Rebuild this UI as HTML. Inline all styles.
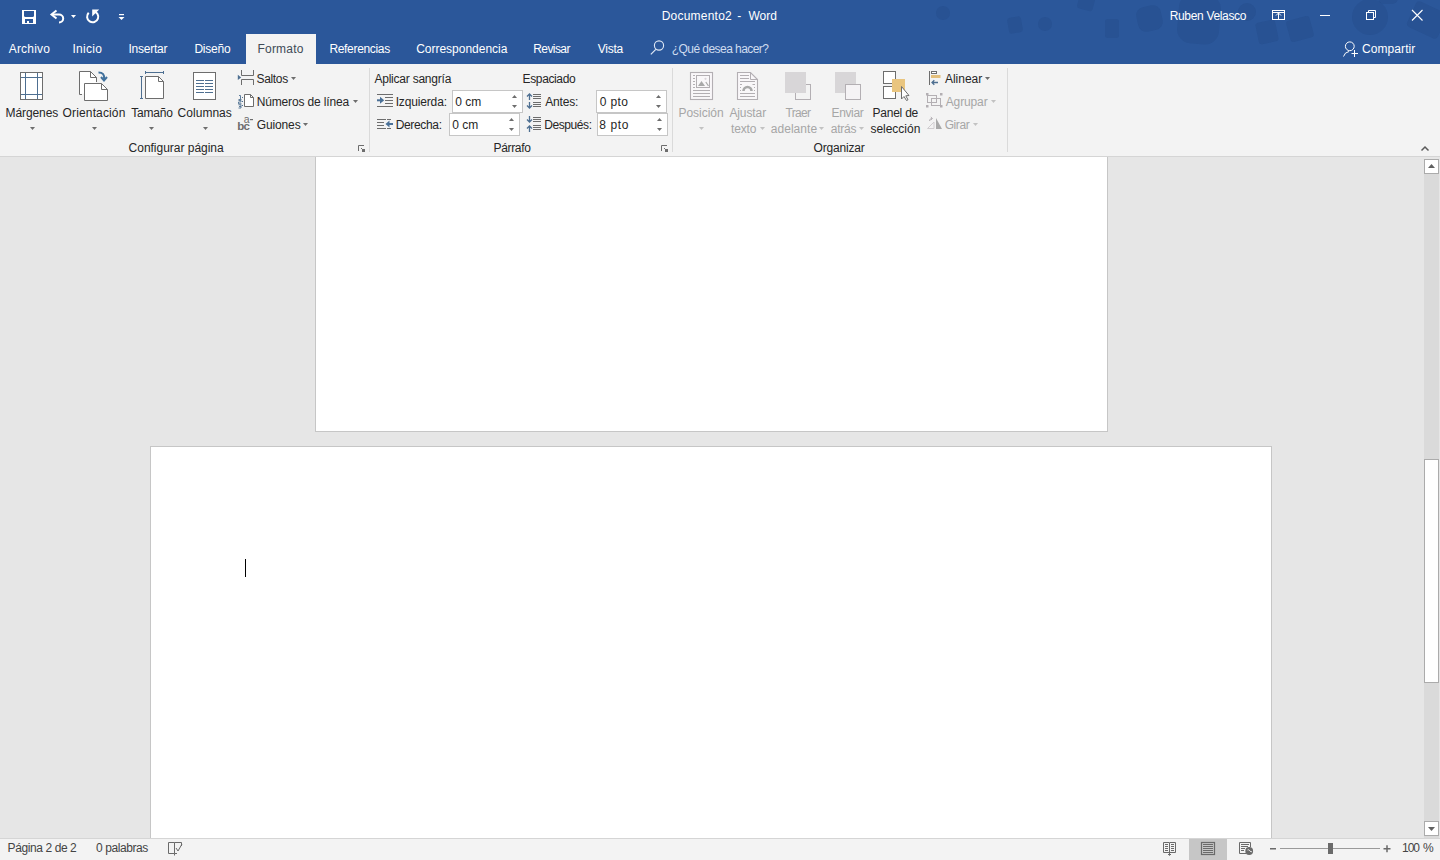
<!DOCTYPE html><html><head><meta charset="utf-8"><title>Documento2 - Word</title><style>
html,body{margin:0;padding:0;width:1440px;height:860px;overflow:hidden;background:#e6e6e6;font-family:'Liberation Sans', sans-serif;}
.a{position:absolute;}
.t{position:absolute;white-space:nowrap;line-height:20px;}
</style></head><body>
<div class="a" style="left:0;top:0;width:1440px;height:64px;background:#2b579a"></div>
<svg class="a" style="left:0;top:0" width="1440" height="64" viewBox="0 0 1440 64">
<g fill="rgba(10,30,80,0.09)">
<circle cx="943" cy="13" r="7"/>
<circle cx="1045" cy="24" r="7"/>
<circle cx="1247" cy="12" r="9"/>
<circle cx="1370" cy="17" r="18"/>
<rect x="1008" y="17" width="14" height="16" rx="3" transform="rotate(-10 1015.0 25.0)"/>
<rect x="1105" y="19" width="14" height="19" rx="3" transform="rotate(0 1112.0 28.5)"/>
<rect x="1078" y="-4" width="16" height="14" rx="3" transform="rotate(15 1086.0 3.0)"/>
<rect x="1137" y="6" width="25" height="25" rx="8" transform="rotate(-12 1149.5 18.5)"/>
<rect x="1178" y="-6" width="42" height="50" rx="14" transform="rotate(5 1199.0 19.0)"/>
<rect x="1257" y="21" width="20" height="22" rx="3" transform="rotate(-12 1267.0 32.0)"/>
<rect x="1288" y="18" width="24" height="22" rx="3" transform="rotate(-15 1300.0 29.0)"/>
<rect x="1410" y="6" width="34" height="28" rx="4" transform="rotate(25 1427.0 20.0)"/>
<rect x="1378" y="-8" width="20" height="12" rx="6" transform="rotate(0 1388.0 -2.0)"/>
</g></svg>
<div class="a" style="left:246px;top:34px;width:70px;height:30px;background:#f3f3f3"></div>
<div class="a" style="left:0;top:64px;width:1440px;height:92px;background:#f3f3f3"></div>
<div class="a" style="left:0;top:156px;width:1440px;height:1px;background:#d5d5d5"></div>
<div class="a" style="left:369px;top:68px;width:1px;height:84px;background:#dadada"></div>
<div class="a" style="left:672px;top:68px;width:1px;height:84px;background:#dadada"></div>
<div class="a" style="left:1007px;top:68px;width:1px;height:84px;background:#dadada"></div>
<div class="a" style="left:315px;top:100px;width:791px;height:331px;background:#fff;border:1px solid #c6c6c6;border-top:none"></div>
<div class="a" style="left:150px;top:446px;width:1120px;height:420px;background:#fff;border:1px solid #c6c6c6"></div>
<div class="a" style="left:0;top:64px;width:1440px;height:92px;background:#f3f3f3"></div>
<div class="a" style="left:0;top:156px;width:1440px;height:1px;background:#d5d5d5"></div>
<div class="a" style="left:369px;top:68px;width:1px;height:84px;background:#dadada"></div>
<div class="a" style="left:672px;top:68px;width:1px;height:84px;background:#dadada"></div>
<div class="a" style="left:1007px;top:68px;width:1px;height:84px;background:#dadada"></div>
<div class="a" style="left:1424px;top:159px;width:15px;height:679px;background:#dadada"></div>
<div class="a" style="left:0;top:838px;width:1440px;height:22px;background:#f3f3f3;border-top:1px solid #d5d5d5"></div>
<div class="a" style="left:1189px;top:839px;width:38px;height:21px;background:#c6c6c6"></div>
<svg class="a" style="left:0;top:0" width="1440" height="860" viewBox="0 0 1440 860">
<rect x="22" y="10" width="14" height="14" fill="#ffffff"/>
<path d="M24 11 H34 V15.5 Q34 17 32.5 17 H25.5 Q24 17 24 15.5 Z" fill="#2b579a"/>
<rect x="25" y="19" width="8" height="4" fill="#2b579a"/>
<rect x="27" y="21" width="2" height="2" fill="#ffffff"/>
<path d="M56.5 10.5 L51.5 14.5 L56.5 18.5" fill="none" stroke="#ffffff" stroke-width="2"/>
<path d="M52 14.5 H59 A4.2 4 0 0 1 59 22.5 " fill="none" stroke="#ffffff" stroke-width="2"/>
<path d="M71 15 H76 L73.5 18 Z" fill="#ffffff"/>
<path d="M93.5 11.2 A5.6 5.6 0 1 1 88.7 12.8" fill="none" stroke="#ffffff" stroke-width="2"/>
<path d="M92.2 9.6 H99.2 L92.2 16.4 Z" fill="#ffffff"/>
<rect x="119" y="14" width="5" height="1.2" fill="#ffffff"/>
<path d="M118.5 17 H124.5 L121.5 20 Z" fill="#ffffff"/>
<rect x="1272.5" y="10.5" width="12" height="9" fill="none" stroke="#ffffff"/>
<line x1="1272" y1="12.5" x2="1285" y2="12.5" stroke="#ffffff"/>
<line x1="1278.5" y1="13" x2="1278.5" y2="20" stroke="#ffffff"/>
<path d="M1276 15.5 L1278.5 13 L1281 15.5" fill="none" stroke="#ffffff"/>
<line x1="1320" y1="15.5" x2="1330" y2="15.5" stroke="#ffffff"/>
<path d="M1368.5 12 V10.5 H1375.5 V17.5 H1374" fill="none" stroke="#ffffff"/>
<rect x="1366.5" y="12.5" width="7" height="7" fill="none" stroke="#ffffff"/>
<path d="M1412 10 L1422.5 20.5 M1422.5 10 L1412 20.5" stroke="#ffffff" stroke-width="1.1"/>
<circle cx="659" cy="45.5" r="4.6" fill="none" stroke="#dfe8f5" stroke-width="1.1"/>
<line x1="650.8" y1="54.3" x2="655.8" y2="49.3" stroke="#dfe8f5" stroke-width="1.2"/>
<circle cx="1349.8" cy="46.3" r="4.4" fill="none" stroke="#ffffff" stroke-width="1"/>
<path d="M1343.5 56.5 A7 7 0 0 1 1349 51.5" fill="none" stroke="#ffffff" stroke-width="1"/>
<path d="M1351.5 53.5 H1358 M1354.5 50 V57" stroke="#ffffff" stroke-width="1"/>
<rect x="20.5" y="72.5" width="22" height="27" fill="#ffffff" stroke="#6d6d6d"/>
<path d="M25.5 73 V99 M37.5 73 V99 M21 77.5 H42 M21 94.5 H42" stroke="#4e6f91"/>
<path d="M82 94.5 H79.5 V71.5 H90.5 L96.5 77.5 V82" fill="#ffffff" stroke="#6d6d6d"/>
<path d="M90.5 71.5 V77.5 H96.5" fill="none" stroke="#6d6d6d"/>
<path d="M84.5 83.5 H101.5 L107.5 89.5 V100.5 H84.5 Z" fill="#ffffff" stroke="#6d6d6d"/>
<path d="M101.5 83.5 V89.5 H107.5" fill="none" stroke="#6d6d6d"/>
<path d="M98.5 72.5 Q105 72.5 104 79" fill="none" stroke="#41719c" stroke-width="2"/>
<path d="M101 77 L104 80.5 L107 77" fill="none" stroke="#41719c" stroke-width="2"/>
<path d="M145.5 76.5 H158.5 L163.5 81.5 V98.5 H145.5 Z" fill="#ffffff" stroke="#6d6d6d"/>
<path d="M158.5 76.5 V81.5 H163.5" fill="none" stroke="#6d6d6d"/>
<path d="M145 72.5 H164 M145.5 71 V74 M163.5 71 V74" stroke="#4e6f91"/>
<path d="M141.5 76 V99 M140 76.5 H143 M140 98.5 H143" stroke="#4e6f91"/>
<rect x="193.5" y="72.5" width="22" height="27" fill="#ffffff" stroke="#6d6d6d"/>
<path d="M196 80.5 H204 M205 80.5 H213" stroke="#4e6f91"/>
<path d="M196 83.5 H204 M205 83.5 H213" stroke="#4e6f91"/>
<path d="M196 86.5 H204 M205 86.5 H213" stroke="#4e6f91"/>
<path d="M196 89.5 H204 M205 89.5 H213" stroke="#4e6f91"/>
<path d="M196 92.5 H204 M205 92.5 H213" stroke="#4e6f91"/>
<path d="M30.0 127 H35.0 L32.5 130 Z" fill="#6d6d6d"/>
<path d="M92.0 127 H97.0 L94.5 130 Z" fill="#6d6d6d"/>
<path d="M149.0 127 H154.0 L151.5 130 Z" fill="#6d6d6d"/>
<path d="M203.0 127 H208.0 L205.5 130 Z" fill="#6d6d6d"/>
<path d="M699.0 127 H704.0 L701.5 130 Z" fill="#c2c2c2"/>
<path d="M241.5 70 V75.5 H253.5 V70 M241.5 85 V79.5 H253.5 V85" fill="none" stroke="#6d6d6d"/>
<path d="M237.8 74.8 L241.2 77.4 L237.8 80 Z" fill="#4e6f91"/>
<path d="M244.5 94.5 H250.5 L253.5 97.5 V106.5 H244.5 Z" fill="#ffffff" stroke="#6d6d6d"/>
<path d="M250.5 94.5 V97.5 H253.5" fill="none" stroke="#6d6d6d"/>
<path d="M239 95.5 H240.5 V99 M238.5 99.5 H241.5" fill="none" stroke="#4e6f91" stroke-width="0.9"/>
<path d="M238.5 100.5 H241 V102 H238.5 V103.8 H241.5" fill="none" stroke="#4e6f91" stroke-width="0.9"/>
<path d="M238.5 104.8 H241 V106.5 H239 M241 106.5 V108 H238.5" fill="none" stroke="#4e6f91" stroke-width="0.9"/>
<rect x="242" y="97" width="1" height="1" fill="#4e6f91"/><rect x="242" y="101" width="1" height="1" fill="#4e6f91"/><rect x="242" y="105" width="1" height="1" fill="#4e6f91"/>
<text x="243.8" y="123" font-family="Liberation Sans" font-size="10.5" fill="#6d6d6d">a</text>
<rect x="250" y="119" width="3" height="1.2" fill="#6d6d6d"/>
<text x="237.2" y="130" font-family="Liberation Sans" font-size="11.5" font-weight="bold" fill="#6d6d6d" letter-spacing="-0.6">bc</text>
<path d="M291.0 77 H296.0 L293.5 80 Z" fill="#6d6d6d"/>
<path d="M353.0 100 H358.0 L355.5 103 Z" fill="#6d6d6d"/>
<path d="M303.0 123 H308.0 L305.5 126 Z" fill="#6d6d6d"/>
<path d="M985.0 77 H990.0 L987.5 80 Z" fill="#6d6d6d"/>
<path d="M991.0 100 H996.0 L993.5 103 Z" fill="#c2c2c2"/>
<path d="M973.0 123 H978.0 L975.5 126 Z" fill="#c2c2c2"/>
<path d="M760.0 127 H765.0 L762.5 130 Z" fill="#c2c2c2"/>
<path d="M819.0 127 H824.0 L821.5 130 Z" fill="#c2c2c2"/>
<path d="M859.0 127 H864.0 L861.5 130 Z" fill="#c2c2c2"/>
<path d="M358.5 151 V145.5 H364" fill="none" stroke="#6d6d6d"/>
<path d="M361 148 L363 150" fill="none" stroke="#6d6d6d"/>
<rect x="362" y="149" width="3" height="3" fill="#6d6d6d"/>
<path d="M661.5 151 V145.5 H667" fill="none" stroke="#6d6d6d"/>
<path d="M664 148 L666 150" fill="none" stroke="#6d6d6d"/>
<rect x="665" y="149" width="3" height="3" fill="#6d6d6d"/>
<path d="M377 94.5 H393 M385 97.5 H393 M385 100.5 H393 M385 103.5 H393 M377 106.5 H393" stroke="#6d6d6d"/>
<path d="M377 100.3 H381" stroke="#4a7097" stroke-width="2"/>
<path d="M380 96.8 L384.2 100.3 L380 103.8 Z" fill="#4a7097"/>
<path d="M377 119.5 H386 M387 119.5 H391 M377 122.5 H384 M377 125.5 H384 M377 128.5 H386 M387 128.5 H391" stroke="#6d6d6d"/>
<path d="M393 124 H388.5" stroke="#4a7097" stroke-width="2"/>
<path d="M389.5 120.5 L385.5 124 L389.5 127.5 Z" fill="#4a7097"/>
<path d="M533 94.5 H541 M533 102.5 H541" stroke="#6d6d6d"/>
<path d="M533 96.5 H541 M533 104.5 H541" stroke="#6d6d6d"/>
<path d="M533 98.5 H541 M533 106.5 H541" stroke="#6d6d6d"/>
<path d="M529.5 100 V94 M527 96.5 L529.5 94 L532 96.5" fill="none" stroke="#4e6f91" stroke-width="1.3"/>
<path d="M529.5 102 V108 M527 105.5 L529.5 108 L532 105.5" fill="none" stroke="#4e6f91" stroke-width="1.3"/>
<path d="M533 117.5 H541 M533 125.5 H541" stroke="#6d6d6d"/>
<path d="M533 119.5 H541 M533 127.5 H541" stroke="#6d6d6d"/>
<path d="M533 121.5 H541 M533 129.5 H541" stroke="#6d6d6d"/>
<path d="M529.5 116 V122 M527 119.5 L529.5 122 L532 119.5" fill="none" stroke="#4e6f91" stroke-width="1.3"/>
<path d="M529.5 132 V126 M527 128.5 L529.5 126 L532 128.5" fill="none" stroke="#4e6f91" stroke-width="1.3"/>
<rect x="452.5" y="90.5" width="70" height="22" fill="#ffffff" stroke="#c6c6c6"/>
<path d="M512 98 H517 L514.5 95 Z" fill="#6d6d6d"/>
<path d="M512 105 H517 L514.5 108 Z" fill="#6d6d6d"/>
<rect x="449.5" y="113.5" width="70" height="22" fill="#ffffff" stroke="#c6c6c6"/>
<path d="M509 121 H514 L511.5 118 Z" fill="#6d6d6d"/>
<path d="M509 128 H514 L511.5 131 Z" fill="#6d6d6d"/>
<rect x="596.5" y="90.5" width="70" height="22" fill="#ffffff" stroke="#c6c6c6"/>
<path d="M656 98 H661 L658.5 95 Z" fill="#6d6d6d"/>
<path d="M656 105 H661 L658.5 108 Z" fill="#6d6d6d"/>
<rect x="597.5" y="113.5" width="70" height="22" fill="#ffffff" stroke="#c6c6c6"/>
<path d="M657 121 H662 L659.5 118 Z" fill="#6d6d6d"/>
<path d="M657 128 H662 L659.5 131 Z" fill="#6d6d6d"/>
<rect x="690.5" y="72.5" width="22" height="27" fill="#f9f7f9" stroke="#b3afb3" stroke-width="1.1"/>
<rect x="696.5" y="75.5" width="13" height="12" fill="none" stroke="#b3afb3"/>
<path d="M698 86 L701.5 81 L705 86 Z" fill="#a9a9a9"/>
<path d="M705.8 82 L708.5 86" stroke="#a9a9a9" stroke-width="1.2"/>
<circle cx="705.5" cy="78.8" r="1.1" fill="#d9d3d9"/>
<path d="M693 75.5 H695 M693 78.5 H695 M693 81.5 H695 M693 84.5 H695 M693 87.5 H695 M693 90.5 H710 M693 93.5 H710 M693 96.5 H710" stroke="#b3afb3"/>
<path d="M737.5 72.5 H750.5 L757.5 79.5 V99.5 H737.5 Z" fill="#f9f7f9" stroke="#b3afb3" stroke-width="1.1"/>
<path d="M750.5 72.5 V79.5 H757.5" fill="none" stroke="#b3afb3"/>
<path d="M740 75.5 H749 M740 78.5 H749 M740 81.5 H755 M740 84.5 H742 M752.5 84.5 H755 M740 93.5 H755 M740 96.5 H755" stroke="#b3afb3" stroke-width="1.1"/>
<rect x="740" y="87" width="1" height="1" fill="#b3afb3"/><rect x="740" y="90" width="1" height="1" fill="#b3afb3"/><rect x="754" y="87" width="1" height="1" fill="#b3afb3"/><rect x="754" y="90" width="1" height="1" fill="#b3afb3"/>
<path d="M743.5 91 A4 4 0 0 1 751.5 91" fill="none" stroke="#a9a9a9" stroke-width="2.6"/>
<rect x="795.5" y="84.5" width="15" height="15" fill="none" stroke="#b3afb3"/>
<rect x="785" y="72" width="21" height="21" fill="#d8d6d8"/>
<rect x="835" y="72" width="21" height="21" fill="#d8d6d8"/>
<rect x="845.5" y="84.5" width="15" height="15" fill="#f5f3f5" stroke="#b3afb3"/>
<rect x="883.5" y="71.5" width="12" height="12" fill="#ffffff" stroke="#6d6d6d"/>
<rect x="883.5" y="86.5" width="12" height="12" fill="#ffffff" stroke="#6d6d6d"/>
<rect x="892" y="79" width="13" height="13" fill="#e9c57f"/>
<path d="M901.5 86.5 V99 L904 96.5 L906.5 100.5 L908 99.8 L905.8 95.8 L909 95.5 Z" fill="#ffffff" stroke="#6d6d6d" stroke-width="1"/>
<path d="M929.5 71 V85" stroke="#6d6d6d"/>
<rect x="931.5" y="71.5" width="5" height="2" fill="#ffffff" stroke="#6d6d6d"/>
<rect x="931" y="75" width="9.5" height="3" fill="#e3bf7c"/>
<path d="M938 82.5 H932 M934.3 80.2 L932 82.5 L934.3 84.8" fill="none" stroke="#4e6f91" stroke-width="1.3"/>
<rect x="927.5" y="95.5" width="9" height="7" fill="none" stroke="#b3afb3"/>
<rect x="931.5" y="98.5" width="9" height="7" fill="none" stroke="#b3afb3"/>
<rect x="926" y="93" width="2.5" height="2.5" fill="#b3afb3"/>
<rect x="940" y="93" width="2.5" height="2.5" fill="#b3afb3"/>
<rect x="926" y="105" width="2.5" height="2.5" fill="#b3afb3"/>
<rect x="940" y="105" width="2.5" height="2.5" fill="#b3afb3"/>
<path d="M936 118 L942 129 H936 Z" fill="#a9a9a9"/>
<path d="M934 122 L927.5 128.5 H934 Z" fill="none" stroke="#d0cdd0"/>
<path d="M929.5 121 Q929.5 118.5 932 118.5 M930.8 117 L932.5 118.5 L930.8 120" fill="none" stroke="#b3afb3"/>
<path d="M1421.5 150.5 L1425 147 L1428.5 150.5" fill="none" stroke="#5a5a5a" stroke-width="1.5"/>
<rect x="1424.5" y="159.5" width="14" height="14" fill="#ffffff" stroke="#ababab"/>
<path d="M1428 168 H1435 L1431.5 164 Z" fill="#606060"/>
<rect x="1424.5" y="459.5" width="14" height="223" fill="#ffffff" stroke="#ababab"/>
<rect x="1424.5" y="821.5" width="14" height="14" fill="#ffffff" stroke="#ababab"/>
<path d="M1428 827 H1435 L1431.5 831 Z" fill="#606060"/>
<rect x="245" y="559" width="1" height="18" fill="#000000"/>
<path d="M168.5 842.5 H174.5 V853.5 H168.5 Z M174.5 842.5 H181.5 V846 M174.5 853.5 H177" fill="none" stroke="#6a6a6a"/>
<path d="M176 848 L178 851 L182 844" fill="none" stroke="#6a6a6a"/>
<path d="M174.5 853.5 V855.5" stroke="#6a6a6a"/>
<path d="M1163.5 842.5 H1169.5 H1175.5 V852.5 H1163.5 Z" fill="none" stroke="#6a6a6a"/>
<path d="M1169.5 843 V855 M1165 844.5 H1168 M1165 846.5 H1168 M1165 848.5 H1168 M1165 850.5 H1168 M1171 844.5 H1174 M1171 846.5 H1174 M1171 848.5 H1174 M1171 850.5 H1174" stroke="#6a6a6a"/>
<path d="M1168 854 L1169.5 855.5 L1171 854" fill="none" stroke="#6a6a6a"/>
<rect x="1201.5" y="842.5" width="13" height="12" fill="none" stroke="#6a6a6a" stroke-width="1.2"/>
<path d="M1203 844.5 H1213 M1203 846.5 H1213 M1203 848.5 H1213 M1203 850.5 H1213 M1203 852.5 H1213" stroke="#6a6a6a"/>
<path d="M1246 853.5 H1239.5 V842.5 H1250.5 V847" fill="none" stroke="#6a6a6a"/>
<path d="M1241 844.5 H1249 M1241 846.5 H1248 M1241 848.5 H1245 M1241 850.5 H1244" stroke="#6a6a6a"/>
<circle cx="1249.2" cy="851" r="3.9" fill="#6a6a6a"/>
<path d="M1247.5 850 Q1249 849 1250 851 Q1251 852.5 1252 851.5" fill="none" stroke="#ffffff" stroke-width="0.8"/>
<rect x="1270" y="848" width="6" height="1.5" fill="#6a6a6a"/>
<rect x="1280" y="848" width="100" height="1" fill="#9a9a9a"/>
<rect x="1328" y="843" width="5" height="11" fill="#6a6a6a"/>
<path d="M1383.5 848.7 H1390.5 M1387 845.2 V852.2" stroke="#6a6a6a" stroke-width="1.5"/>
</svg>
<div class="t" style="left:661.70px;top:6px;font-size:12px;letter-spacing:0.222px;color:#ffffff;">Documento2</div>
<div class="t" style="left:737.20px;top:6px;font-size:12px;letter-spacing:0.000px;color:#ffffff;">-</div>
<div class="t" style="left:748.40px;top:6px;font-size:12px;letter-spacing:0.000px;color:#ffffff;">Word</div>
<div class="t" style="left:1169.70px;top:6px;font-size:12px;letter-spacing:-0.333px;color:#ffffff;">Ruben Velasco</div>
<div class="t" style="left:8.70px;top:39px;font-size:12px;letter-spacing:0.217px;color:#ffffff;">Archivo</div>
<div class="t" style="left:72.40px;top:39px;font-size:12px;letter-spacing:0.320px;color:#ffffff;">Inicio</div>
<div class="t" style="left:128.40px;top:39px;font-size:12px;letter-spacing:-0.214px;color:#ffffff;">Insertar</div>
<div class="t" style="left:194.40px;top:39px;font-size:12px;letter-spacing:-0.200px;color:#ffffff;">Diseño</div>
<div class="t" style="left:257.50px;top:39px;font-size:12px;letter-spacing:0.200px;color:#414b57;">Formato</div>
<div class="t" style="left:329.40px;top:39px;font-size:12px;letter-spacing:-0.320px;color:#ffffff;">Referencias</div>
<div class="t" style="left:416.20px;top:39px;font-size:12px;letter-spacing:-0.014px;color:#ffffff;">Correspondencia</div>
<div class="t" style="left:533.20px;top:39px;font-size:12px;letter-spacing:-0.567px;color:#ffffff;">Revisar</div>
<div class="t" style="left:597.80px;top:39px;font-size:12px;letter-spacing:-0.250px;color:#ffffff;">Vista</div>
<div class="t" style="left:671.80px;top:39px;font-size:12px;letter-spacing:-0.556px;color:#cfdcef;">¿Qué desea hacer?</div>
<div class="t" style="left:1361.90px;top:39px;font-size:12px;letter-spacing:0.100px;color:#ffffff;">Compartir</div>
<div class="t" style="left:5.60px;top:103px;font-size:12px;letter-spacing:-0.100px;color:#262626;">Márgenes</div>
<div class="t" style="left:62.60px;top:103px;font-size:12px;letter-spacing:0.140px;color:#262626;">Orientación</div>
<div class="t" style="left:131.20px;top:103px;font-size:12px;letter-spacing:-0.180px;color:#262626;">Tamaño</div>
<div class="t" style="left:177.60px;top:103px;font-size:12px;letter-spacing:0.029px;color:#262626;">Columnas</div>
<div class="t" style="left:256.50px;top:69px;font-size:12px;letter-spacing:-0.340px;color:#262626;">Saltos</div>
<div class="t" style="left:256.70px;top:92px;font-size:12px;letter-spacing:-0.147px;color:#262626;">Números de línea</div>
<div class="t" style="left:256.70px;top:115px;font-size:12px;letter-spacing:-0.117px;color:#262626;">Guiones</div>
<div class="t" style="left:128.60px;top:138px;font-size:12px;letter-spacing:-0.019px;color:#262626;">Configurar página</div>
<div class="t" style="left:374.40px;top:69px;font-size:12px;letter-spacing:-0.221px;color:#262626;">Aplicar sangría</div>
<div class="t" style="left:522.60px;top:69px;font-size:12px;letter-spacing:-0.375px;color:#262626;">Espaciado</div>
<div class="t" style="left:395.70px;top:92px;font-size:12px;letter-spacing:-0.156px;color:#262626;">Izquierda:</div>
<div class="t" style="left:395.70px;top:115px;font-size:12px;letter-spacing:-0.343px;color:#262626;">Derecha:</div>
<div class="t" style="left:545.20px;top:92px;font-size:12px;letter-spacing:-0.160px;color:#262626;">Antes:</div>
<div class="t" style="left:544.20px;top:115px;font-size:12px;letter-spacing:-0.414px;color:#262626;">Después:</div>
<div class="t" style="left:455.20px;top:92px;font-size:12px;letter-spacing:0.000px;color:#262626;">0 cm</div>
<div class="t" style="left:452.20px;top:115px;font-size:12px;letter-spacing:0.000px;color:#262626;">0 cm</div>
<div class="t" style="left:599.70px;top:92px;font-size:12px;letter-spacing:0.375px;color:#262626;">0 pto</div>
<div class="t" style="left:599.20px;top:115px;font-size:12px;letter-spacing:0.625px;color:#262626;">8 pto</div>
<div class="t" style="left:493.50px;top:138px;font-size:12px;letter-spacing:-0.333px;color:#262626;">Párrafo</div>
<div class="t" style="left:678.40px;top:103px;font-size:12px;letter-spacing:-0.014px;color:#a6a6a6;">Posición</div>
<div class="t" style="left:729.40px;top:103px;font-size:12px;letter-spacing:-0.100px;color:#a6a6a6;">Ajustar</div>
<div class="t" style="left:731.00px;top:119px;font-size:12px;letter-spacing:-0.150px;color:#a6a6a6;">texto</div>
<div class="t" style="left:785.60px;top:103px;font-size:12px;letter-spacing:-0.675px;color:#a6a6a6;">Traer</div>
<div class="t" style="left:770.70px;top:119px;font-size:12px;letter-spacing:0.057px;color:#a6a6a6;">adelante</div>
<div class="t" style="left:831.50px;top:103px;font-size:12px;letter-spacing:-0.360px;color:#a6a6a6;">Enviar</div>
<div class="t" style="left:830.80px;top:119px;font-size:12px;letter-spacing:-0.250px;color:#a6a6a6;">atrás</div>
<div class="t" style="left:872.50px;top:103px;font-size:12px;letter-spacing:-0.229px;color:#262626;">Panel de</div>
<div class="t" style="left:870.40px;top:119px;font-size:12px;letter-spacing:-0.013px;color:#262626;">selección</div>
<div class="t" style="left:945.00px;top:69px;font-size:12px;letter-spacing:-0.033px;color:#262626;">Alinear</div>
<div class="t" style="left:945.70px;top:92px;font-size:12px;letter-spacing:-0.117px;color:#a6a6a6;">Agrupar</div>
<div class="t" style="left:944.70px;top:115px;font-size:12px;letter-spacing:-0.425px;color:#a6a6a6;">Girar</div>
<div class="t" style="left:813.50px;top:138px;font-size:12px;letter-spacing:-0.188px;color:#262626;">Organizar</div>
<div class="t" style="left:7.60px;top:838px;font-size:12px;letter-spacing:-0.408px;color:#444444;">Página 2 de 2</div>
<div class="t" style="left:96.10px;top:838px;font-size:12px;letter-spacing:-0.422px;color:#444444;">0 palabras</div>
<div class="t" style="left:1402.00px;top:838px;font-size:12px;letter-spacing:-1.000px;color:#444444;">100</div>
<div class="t" style="left:1423.00px;top:838px;font-size:12px;letter-spacing:0.000px;color:#444444;">%</div>
</body></html>
